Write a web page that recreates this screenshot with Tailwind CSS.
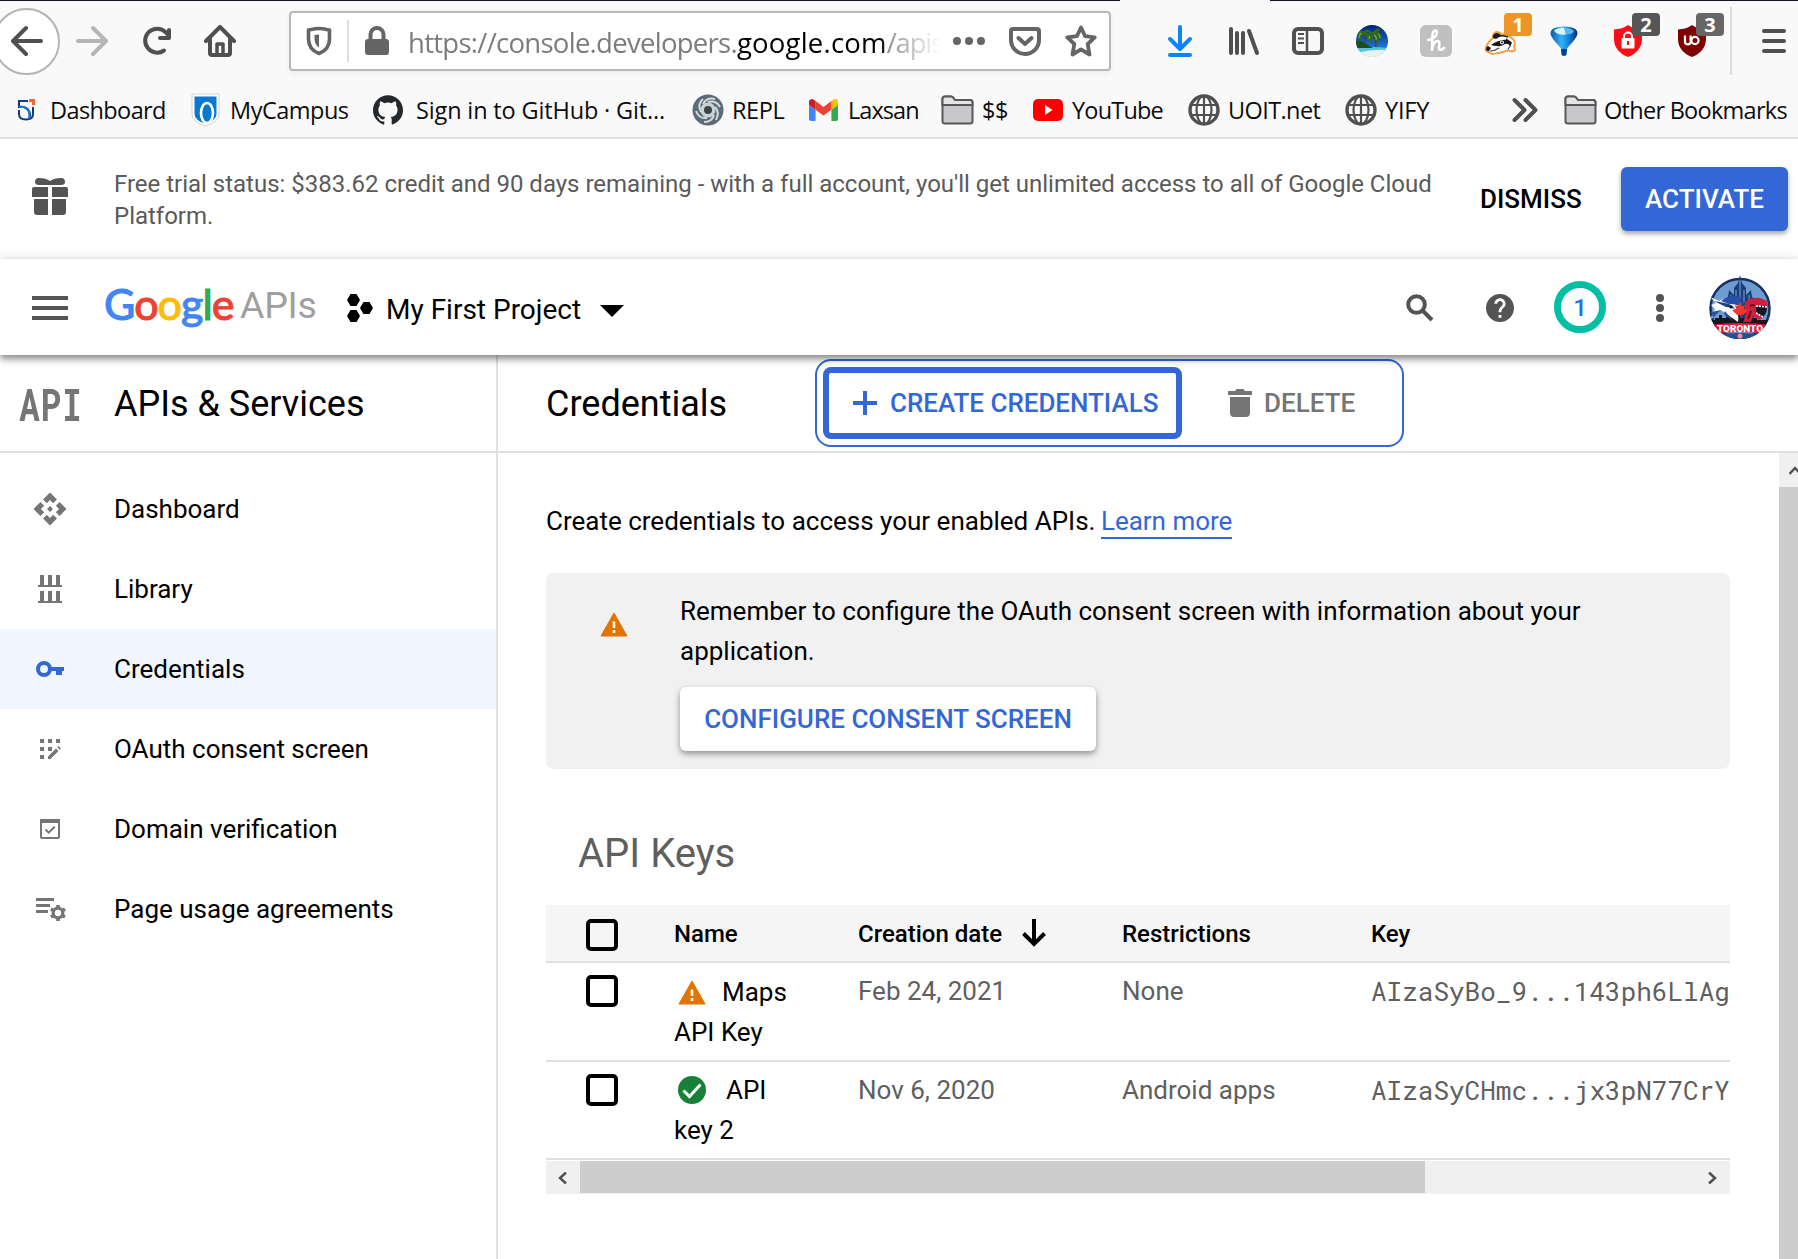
<!DOCTYPE html>
<html lang="en">
<head>
<meta charset="utf-8">
<title>Credentials</title>
<script src="https://cdn.jsdelivr.net/npm/@tailwindcss/browser@4"></script>
</head>
<body class="w-[1798px] h-[1259px] overflow-hidden bg-white text-black font-['Roboto',sans-serif] flex flex-col">

<!-- Browser chrome -->
<div class="h-[139px] shrink-0 bg-[#f9f9fa] border-b-2 border-[#e0e0e1] font-['Open_Sans','Noto_Sans',sans-serif] flex flex-col">
  <div class="h-px flex justify-between"><div class="w-[1120px] bg-[#15132b]"></div><div class="w-[528px] bg-[#15132b]"></div></div>
  <div class="h-20 flex items-center text-[#505052]">
    <div class="-ml-[7px] w-[67px] h-[67px] rounded-full bg-white border-2 border-[#b4b4b5] grid place-items-center">
      <svg width="32" height="32" viewBox="0 0 32 32" fill="none" stroke="currentColor" stroke-width="4" stroke-linecap="round" stroke-linejoin="round"><path d="M30 16H2M15 3 2 16l13 13"/></svg>
    </div>
    <svg class="ml-4" width="32" height="32" viewBox="0 0 32 32" fill="none" stroke="#b5b5b6" stroke-width="4" stroke-linecap="round" stroke-linejoin="round"><path d="M2 16h28M17 3l13 13-13 13"/></svg>
    <svg class="ml-[33px]" width="32" height="32" viewBox="0 0 32 32" fill="none" stroke="currentColor" stroke-width="4" stroke-linecap="round" stroke-linejoin="round"><path d="M23 25.500a12 12 0 1 1 1.500-18.500L28 11"/><path d="M28 5v8h-9" /></svg>
    <svg class="ml-[31px]" width="32" height="32" viewBox="0 0 32 32" fill="none" stroke="currentColor" stroke-width="4" stroke-linecap="round" stroke-linejoin="round"><path d="M2 16 16 2l14 14M6 14v14q0 2 2 2h16q2 0 2-2V14"/><path d="M13 29V19h6v10" stroke-width="3.500"/></svg>

    <!-- Address bar -->
    <div class="ml-[53px] w-[822px] h-[60px] rounded border-2 border-[#b9b9ba] bg-white shadow-[0_2px_6px_rgba(0,0,0,0.06)] flex items-center text-[#656566]">
      <svg class="ml-[15px]" width="26" height="30" viewBox="0 0 26 30" fill="none" stroke="currentColor" stroke-width="3.600"><path d="M13 2.500c4 0 7 .8 10.500 1.500v9c0 7-4 12-10.500 14.500C6.500 25 2.500 20 2.500 13V4C6 3.300 9 2.500 13 2.500z" stroke-linejoin="round"/><path d="M13 8.500v13c-3-2-4.500-5-4.500-8.500V9z" fill="currentColor" stroke="none"/></svg>
      <div class="ml-[15px] w-0.5 h-[42px] bg-[#dedede]"></div>
      <svg class="ml-[15px]" width="26" height="30" viewBox="0 0 26 30"><rect x="1" y="13" width="24" height="16" rx="3" fill="currentColor"/><path d="M6.500 15V8.500a6.500 6.500 0 0 1 13 0V15" fill="none" stroke="currentColor" stroke-width="4"/></svg>
      <div class="ml-[18px] w-[533px] pt-1 overflow-hidden whitespace-nowrap text-[27.500px] leading-10 text-[#7c7c7d] mask-r-from-[470px] mask-r-to-[533px]"><span class="tracking-[-0.720px]">https://console.developers.</span><span class="text-black tracking-[0.200px]">google.com</span><span class="tracking-[-1.200px]">/apis</span></div>
      <svg class="ml-3" width="32" height="30" viewBox="0 0 32 30" fill="currentColor"><circle cx="4" cy="15" r="4"/><circle cx="16" cy="15" r="4"/><circle cx="28" cy="15" r="4"/></svg>
      <svg class="ml-6" width="32" height="30" viewBox="0 0 32 30" fill="none" stroke="currentColor" stroke-width="4" stroke-linejoin="round" stroke-linecap="round"><path d="M4 3h24q2 0 2 2v9a14 14 0 0 1-28 0V5q0-2 2-2z"/><path d="m9.500 12 6.500 6 6.500-6"/></svg>
      <svg class="ml-6" width="32" height="32" viewBox="0 0 32 32" fill="none" stroke="currentColor" stroke-width="3.800" stroke-linejoin="round"><path d="m16 2.500 4.100 8.700 9.600 1.200-7 6.600 1.800 10.500L16 24.400l-8.500 5.100L9.300 19l-7-6.600 9.600-1.200z"/></svg>
    </div>

    <!-- Extension buttons -->
    <div class="ml-[37px] grid grid-cols-[repeat(9,64px)] place-items-center">
      <svg width="32" height="32" viewBox="0 0 32 32" fill="none" stroke="#0a84ff" stroke-width="4" stroke-linecap="round" stroke-linejoin="round"><path d="M16 2v22M6 14l10 10 10-10M6 30h20"/></svg>
      <svg width="32" height="32" viewBox="0 0 32 32" fill="none" stroke="currentColor" stroke-width="4" stroke-linecap="round"><path d="M3 4v24M9 8v20M15 8v20M21 6l8 22"/></svg>
      <svg width="32" height="32" viewBox="0 0 32 32" fill="none" stroke="currentColor" stroke-width="4"><rect x="2" y="4" width="28" height="24" rx="4"/><path d="M15 4v24" stroke-width="2.500"/><path d="M6 9h6M6 13.500h6M6 18h6" stroke-width="2.200"/></svg>
      <svg width="32" height="32" viewBox="0 0 32 32"><defs><clipPath id="isle"><circle cx="16" cy="16" r="16"/></clipPath><linearGradient id="sky" x1="0" y1="0" x2="0" y2="1"><stop offset="0" stop-color="#06217d"/><stop offset=".65" stop-color="#1a6fd0"/><stop offset="1" stop-color="#4ec3e8"/></linearGradient></defs><g clip-path="url(#isle)"><path fill="url(#sky)" d="M0 0h32v32H0z"/><path d="M0 26q14-4 32-1v8H0z" fill="#e9f2f2"/><path d="M0 23q12-2 32 0v2q-16-1-32 3z" fill="#54c4dc"/><path d="M0 16q5-1 9 2t8 5H0z" fill="#1f4d17"/><path d="M9 17q1-6-1-9M20 22q0-7-2-13" stroke="#54431d" stroke-width="1.500" fill="none"/><g stroke="#2e6b1a" stroke-width="2.400" fill="none" stroke-linecap="round"><path d="M8 8Q4 5 1 10M8 8q-4 1-4 6M8 8q4 0 4 6M8 8q3-4 6-1M18 9q-4-3-6 2M18 9q-4 2-3 8M18 9q4 1 4 8M18 9q5-3 7 3M18 9q2-5 5-4"/></g><path d="M5 8q-2 2-2 5M18 10q3 2 2 5M14 11q-1 1-1 3M22 9q2 1 2 4" stroke="#7fae35" stroke-width="1.200" fill="none"/></g></svg>
      <div class="w-8 h-8 rounded-md bg-[#c0c0c0] grid place-items-center"><svg width="22" height="26" viewBox="0 0 22 26" fill="none" stroke="#fff" stroke-width="2.600" stroke-linecap="round" stroke-linejoin="round"><path d="M3 12C7 12 12 8 12 4.500 12 1.500 8 2 7.500 7L7 22c1-6 3-9 5.500-9s2 4 1.500 6.500 2 3.500 5 .5"/></svg></div>
      <div class="relative w-8 h-8">
        <svg width="32" height="32" viewBox="0 0 32 32"><path d="M1.500 24Q3 18 9 13q-1-4 3-6 4 0 5 2 7 0 12 5 3 4 1 7l1 4q-3 3-7 0-5 3-10 3-7 2-9-1-3 0-3.500-3z" fill="#fff" stroke="#f29a3c" stroke-width="1.800"/><path d="M9 13q-1-3 3-5 4 0 5 3l-5 3z" fill="#181818"/><path d="M2 24q0-2 2-3l3 2-2 3q-3 0-3-2z" fill="#181818"/><path d="M7 20q5-4 12-5 6-1 9 3l-2 3q-2-3-5-2-5 3-8 2-3 0-6-1z" fill="#181818"/><path d="M14 11q6-1 10 1M22 14l5 4" stroke="#181818" stroke-width="1.500" fill="none"/><circle cx="18" cy="17.500" r="2" fill="#fff"/><circle cx="18" cy="17.500" r="1" fill="#181818"/><path d="M6 26q5 0 9-3M24 24l3-4" stroke="#444" stroke-width="1.200" fill="none"/></svg>
        <div class="absolute left-5 -top-3 w-7 h-[23px] rounded-sm bg-[#ee9527] text-white font-bold text-[20px] leading-6 text-center">1</div>
      </div>
      <svg width="32" height="32" viewBox="0 0 32 32"><defs><linearGradient id="bal"><stop offset="0" stop-color="#0a56a8"/><stop offset=".4" stop-color="#32b4f5"/><stop offset=".7" stop-color="#0f7bd6"/><stop offset="1" stop-color="#042f6b"/></linearGradient></defs><path d="M2.500 8Q3 1.500 16 1.500T29.500 8q0 3-4.500 8.500-4 4.500-6 7l-.5 6.500q-2.500 2-5 0L13 23.500q-2-2.500-6-7Q2.500 11 2.500 8z" fill="url(#bal)"/><path d="M6 6q3-3.500 10-3.500l2 7q-8 1-12-3.500z" fill="#d8f3fd"/><path d="M16 2.500q8 .5 10 4-2 3-8 3z" fill="#5bb7ee"/><path d="M13 24h6l-.8 6q-2.200 1.500-4.400 0z" fill="#093f7c"/></svg>
      <div class="relative w-8 h-8">
        <svg width="32" height="32" viewBox="0 0 32 32"><path d="M16 0q5 4 14 4.500V14c0 9-6 15-14 18C8 29 2 23 2 14V4.500Q11 4 16 0z" fill="#fb0f17"/><rect x="9.500" y="13" width="13" height="10.500" rx="1" fill="#fff"/><path d="M12 14v-2.500a4 4 0 0 1 8 0V14" fill="none" stroke="#fff" stroke-width="2"/><path d="M16 16v4" stroke="#fb0f17" stroke-width="2"/></svg>
        <div class="absolute left-5 -top-3 w-7 h-[23px] rounded-sm bg-[#565656] text-white font-bold text-[20px] leading-6 text-center">2</div>
      </div>
      <div class="relative w-8 h-8">
        <svg width="32" height="32" viewBox="0 0 32 32"><path d="M16 0q5 4 14 4.500V14c0 9-6 15-14 18C8 29 2 23 2 14V4.500Q11 4 16 0z" fill="#800000"/><path d="M9 10.500v5.500a2.800 2.800 0 0 0 5.600 1" fill="none" stroke="#fff" stroke-width="2.200"/><path d="M14.600 10.500v6" stroke="#fff" stroke-width="2.200"/><circle cx="19" cy="15.500" r="3.600" fill="none" stroke="#fff" stroke-width="2.200"/></svg>
        <div class="absolute left-5 -top-3 w-7 h-[23px] rounded-sm bg-[#666] text-white font-bold text-[20px] leading-6 text-center">3</div>
      </div>
    </div>
    <div class="ml-[6px] w-0.5 h-[68px] bg-[#dcdcdd]"></div>
    <svg class="ml-[30px]" width="24" height="24" viewBox="0 0 24 24" stroke="currentColor" stroke-width="4" stroke-linecap="round"><path d="M2 2h20M2 12h20M2 22h20"/></svg>
  </div>

  <!-- Bookmarks toolbar -->
  <div class="h-14 pt-px flex items-center whitespace-nowrap text-[23.500px] leading-8 text-[#0c0c0d]">
    <div class="pl-[17px] w-[188px] flex items-center gap-[15px]">
      <svg width="18" height="22" viewBox="0 0 18 22" fill="none" stroke="#123a7a" stroke-width="2"><path d="M11 2H2v6q7-1 10 4 2 4 0 8"/><path d="M2 11v4q0 5.500 7 5.500t7-5.500V8"/><path d="M2 8q7-1 10 5 1 4 0 7" stroke="#1c75d8"/><path d="M12 1.500h4.500V6" stroke="#f2663b" stroke-width="3"/></svg>
      <span class="tracking-[-0.600px] pt-px">Dashboard</span></div>
    <div class="w-[183px] flex items-center gap-2.5 pl-[3px]">
      <svg width="29" height="34" viewBox="0 0 29 34"><path d="M1 1h27v20q0 8-13.500 12Q1 29 1 21z" fill="#fff" stroke="#d3d3d3"/><path d="M3.500 3.500h22V21q0 6-11 10-11-4-11-10z" fill="#0a78cf"/><ellipse cx="16" cy="20" rx="6" ry="10" fill="none" stroke="#fff" stroke-width="2.600"/></svg>
      <span class="tracking-[-0.500px] pt-px">MyCampus</span></div>
    <div class="w-[319px] flex items-center gap-[13px] pl-0.5">
      <svg width="30" height="30" viewBox="0 0 24 24" fill="#24292e"><path d="M12 .297c-6.630 0-12 5.373-12 12 0 5.303 3.438 9.800 8.205 11.385.6.113.82-.258.82-.577 0-.285-.01-1.040-.015-2.040-3.338.724-4.042-1.610-4.042-1.610C4.422 18.070 3.633 17.700 3.633 17.700c-1.087-.744.084-.729.084-.729 1.205.084 1.838 1.236 1.838 1.236 1.070 1.835 2.809 1.305 3.495.998.108-.776.417-1.305.76-1.605-2.665-.3-5.466-1.332-5.466-5.930 0-1.310.465-2.380 1.235-3.220-.135-.303-.54-1.523.105-3.176 0 0 1.005-.322 3.300 1.230.96-.267 1.980-.399 3-.405 1.020.006 2.040.138 3 .405 2.280-1.552 3.285-1.230 3.285-1.230.645 1.653.24 2.873.12 3.176.765.840 1.230 1.910 1.230 3.220 0 4.610-2.805 5.625-5.475 5.920.42.360.81 1.096.81 2.220 0 1.606-.015 2.896-.015 3.286 0 .315.21.690.825.570C20.565 22.092 24 17.592 24 12.297c0-6.627-5.373-12-12-12"/></svg>
      <span class="tracking-[-0.150px] pt-px">Sign in to GitHub · Git...</span></div>
    <div class="w-[117px] flex items-center gap-2 pl-0.5">
      <svg width="32" height="32" viewBox="0 0 32 32" fill="none"><circle cx="16" cy="16" r="15.500" fill="#5d6b76"/><g stroke="#d3dbe0" stroke-width="2"><path d="M16 8Q24 6 28 13M23 13q5 5 1 13M22 21q-2 7-10 7M15 24Q7 25 4 17M9 18Q5 10 11 5M11 10q4-7 12-5"/></g><circle cx="16" cy="16" r="7.500" fill="#c9d2d7"/><circle cx="16" cy="16" r="4" fill="#3e4346"/></svg>
      <span class="tracking-[-0.400px] pt-px">REPL</span></div>
    <div class="w-[134px] flex items-center gap-2.5 pl-0.5">
      <svg width="29" height="22" viewBox="52 42 88 66"><path fill="#4285f4" d="M58 108h14V74L52 59v43c0 3.320 2.690 6 6 6"/><path fill="#34a853" d="M120 108h14c3.320 0 6-2.690 6-6V59l-20 15"/><path fill="#fbbc04" d="M120 48v26l20-15v-8c0-7.420-8.470-11.650-14.400-7.200"/><path fill="#ea4335" d="M72 74V48l24 18 24-18v26L96 92"/><path fill="#c5221f" d="M52 51v8l20 15V48l-5.600-4.200c-5.940-4.450-14.400-.22-14.400 7.200"/></svg>
      <span class="tracking-[-0.950px] pt-px">Laxsan</span></div>
    <div class="w-[90px] flex items-center gap-2">
      <svg width="33" height="30" viewBox="0 0 33 30" stroke="#58585a" stroke-width="2"><path d="M1.500 26V4q0-2.500 2.500-2.500h6q1.500 0 2 1L14 5h15q2.500 0 2.500 2.500V26q0 2.500-2.500 2.500H4q-2.500 0-2.500-2.500z" fill="#c8c8ca"/><path d="M1.500 10V4q0-2.500 2.500-2.500h6q1.500 0 2 1L14 5h15q2.500 0 2.500 2.500V10z" fill="#e4e4e5"/></svg>
      <span class="tracking-[-0.500px] pt-px">$$</span></div>
    <div class="w-[155px] flex items-center gap-2.5 pl-0.5">
      <svg width="30" height="22" viewBox="0 0 30 22"><rect width="30" height="22" rx="5" fill="#f00"/><path d="m12 6 7.500 5-7.500 5z" fill="#fff"/></svg>
      <span class="tracking-[-0.800px] pt-px -ml-px">YouTube</span></div>
    <div class="w-[157px] flex items-center gap-2 pl-0.5">
      <svg width="32" height="32" viewBox="0 0 32 32" fill="none" stroke="#505052" stroke-width="2.200"><circle cx="16" cy="16" r="14" stroke-width="3.400"/><ellipse cx="16" cy="16" rx="7.500" ry="14"/><path d="M16 2v28M3.500 11h25M3.500 21h25"/></svg>
      <span class="tracking-[-0.600px] pt-px">UOIT.net</span></div>
    <div class="w-[169px] flex items-center gap-2 pl-0.5">
      <svg width="32" height="32" viewBox="0 0 32 32" fill="none" stroke="#505052" stroke-width="2.200"><circle cx="16" cy="16" r="14" stroke-width="3.400"/><ellipse cx="16" cy="16" rx="7.500" ry="14"/><path d="M16 2v28M3.500 11h25M3.500 21h25"/></svg>
      <span class="tracking-[-0.200px] pt-px">YIFY</span></div>
    <svg width="26" height="26" viewBox="0 0 26 26" fill="none" stroke="#505052" stroke-width="4" stroke-linecap="round" stroke-linejoin="round"><path d="m2.500 3 10 10-10 10M13.500 3l10 10-10 10"/></svg>
    <div class="ml-[26px] flex items-center gap-[7px]">
      <svg width="33" height="30" viewBox="0 0 33 30" stroke="#58585a" stroke-width="2"><path d="M1.500 26V4q0-2.500 2.500-2.500h6q1.500 0 2 1L14 5h15q2.500 0 2.500 2.500V26q0 2.500-2.500 2.500H4q-2.500 0-2.500-2.500z" fill="#c8c8ca"/><path d="M1.500 10V4q0-2.500 2.500-2.500h6q1.500 0 2 1L14 5h15q2.500 0 2.500 2.500V10z" fill="#e4e4e5"/></svg>
      <span class="tracking-[-0.720px] pt-px">Other Bookmarks</span></div>
  </div>
</div>

<!-- Free trial banner -->
<div class="h-[120px] shrink-0 flex items-center">
  <svg class="ml-8 mb-1.5" width="36" height="38" viewBox="0 0 36 38" fill="#545454"><path d="M2 10h14v10H0v-8q0-2 2-2zM20 10h14q2 0 2 2v8H20zM2 22h14v16H5q-3 0-3-3zM20 22h14v13q0 3-3 3H20z"/><path d="M3 5q0-4 4-4 7 0 11 3 4-3 11-3 4 0 4 4 0 3-4 3H7q-4 0-4-3z"/></svg>
  <div class="ml-[46px] w-[1366px] pt-0.5 text-2xl leading-8 tracking-[-0.010px] text-[#5a5a5a]">Free trial status: $383.62 credit and 90 days remaining - with a full account, you'll get unlimited access to all of Google Cloud<br>Platform.</div>
  <div class="text-[26px] font-medium w-[141px]">DISMISS</div>
  <div class="w-[167px] h-16 rounded-md bg-[#3367d6] text-white text-[26px] font-medium grid place-items-center shadow-[0_3px_5px_rgba(0,0,0,0.35)]">ACTIVATE</div>
</div>

<!-- Console header -->
<header class="relative z-10 h-24 shrink-0 bg-white flex items-center shadow-[0_4px_6px_rgba(0,0,0,0.35),0_2px_12px_rgba(0,0,0,0.2)]">
  <svg class="ml-8 mt-0.5" width="36" height="24" viewBox="0 0 36 24" fill="#545454"><path d="M0 0h36v4H0zM0 10h36v4H0zM0 20h36v4H0z"/></svg>
  <div class="ml-9 mb-1.5 w-[243px] flex items-start whitespace-nowrap">
    <div class="w-[136px] font-['Lato',sans-serif] text-[43px] leading-[56px] tracking-[-1px] font-medium [-webkit-text-stroke:0.900px]"><span class="text-[#4285f4]">G</span><span class="text-[#ea4335]">o</span><span class="text-[#fbbc05]">o</span><span class="text-[#4285f4]">g</span><span class="text-[#34a853]">l</span><span class="text-[#ea4335]">e</span></div>
    <span class="pt-px text-[37.500px] leading-[56px] tracking-[-0.300px] text-[#9f9f9f]">APIs</span>
  </div>
  <svg class="mt-0.5" width="26" height="28" viewBox="0 0 26 28"><path d="M3.500 0h6L13 6l-3.500 6h-6L0 6zM3.500 16h6l3.500 6-3.500 6h-6L0 22zM16.500 8h6l3.500 6-3.500 6h-6L13 14z"/></svg>
  <div class="ml-[13px] w-[214px] pt-1.5 text-[28px] leading-9">My First Project</div>
  <svg class="mt-[7px]" width="24" height="12" viewBox="0 0 24 12"><path d="M0 0h24L12 12z"/></svg>
  <svg class="ml-auto mt-0.5" width="28" height="28" viewBox="0 0 28 28" fill="none" stroke="#545454" stroke-width="4"><circle cx="10.500" cy="10.500" r="8.300"/><path d="m16.500 16.500 9.500 9.500"/></svg>
  <svg class="ml-[52px] mt-0.5" width="28" height="28" viewBox="2 2 20 20" fill="#545454"><path d="M12 2C6.480 2 2 6.480 2 12s4.480 10 10 10 10-4.480 10-10S17.520 2 12 2zm1 17h-2v-2h2v2zm2.070-7.750-.9.920C13.450 12.900 13 13.500 13 15h-2v-.5c0-1.100.45-2.100 1.170-2.830l1.240-1.260c.37-.36.59-.86.59-1.410 0-1.100-.9-2-2-2s-2 .9-2 2H8c0-2.210 1.790-4 4-4s4 1.790 4 4c0 .88-.36 1.680-.93 2.250z"/></svg>
  <div class="ml-10 w-[52px] h-[52px] rounded-full border-[7px] border-[#00bfa5] grid place-items-center text-[#1a73e8] text-2xl font-medium"><span class="pt-0.5">1</span></div>
  <svg class="ml-[50px] mt-0.5" width="8" height="28" viewBox="0 0 8 28" fill="#545454"><circle cx="4" cy="4" r="4"/><circle cx="4" cy="14" r="4"/><circle cx="4" cy="24" r="4"/></svg>
  <svg class="ml-[45px] mr-[27px]" width="62" height="64" viewBox="0 0 62 64"><defs><clipPath id="av"><circle cx="31" cy="33.500" r="30.500"/></clipPath></defs>
    <circle cx="31" cy="33.500" r="29.500" fill="#6f9bd3" stroke="#16305f" stroke-width="2.500"/>
    <path d="M31 0l2 8 4 5v7l5-5 1 7 6 4-5 20H18l-5-20 6-4 1-7 5 5v-7l4-5z" fill="#1b3d78"/>
    <path d="M31 5v20M27 15v12M35 15v12M22 20v6M40 20v6" stroke="#7fa8dc"/>
    <g clip-path="url(#av)">
      <path d="M0 45h62v9H0z" fill="#15171d"/><path d="M6 48v-5h4v-3h3v3h5v-6h3v6h6v-5h4v5h6v-7h3v7h8v5z" fill="#15171d"/>
      <path d="M1 22l9 4q4-3 8-2 11 2 16 14l-6-1q2 4 1 10L12 35 2 44q1-6 4-10l-4-4 5-2z" fill="#fff"/>
      <path d="M12 26q10-8 22-3l-3 3 5 2-4 2 3 5q-6-7-15-6z" fill="#2850a8"/>
      <path d="M5 26l11 2q7 1 10 6-5-2-9-2z" fill="#20407f"/>
      <path d="M2 37l10-2-8 8zM16 36l8 10-9-7z" fill="#29549f"/><circle cx="22" cy="32" r="1.500" fill="#111"/>
      <path d="M36 27q7-5 15-4l7 3 1 6-9-2-3 5 8 7-5 3-6-4-2 6h-8q4-8 2-14z" fill="#cf1f3c"/>
      <path d="M47 32q6-3 11 0 0 8-5 10l-6-5z" fill="#15171d"/><path d="M47 31l11 1M47 38l7 4" stroke="#fff" stroke-width="1.600" stroke-dasharray="2 1"/><path d="M41 31q3-2 5 0M42 36l-3 8" stroke="#4c0c18" stroke-width="1.500" fill="none"/>
      <path d="M31 27l2 4 3-1-1 4 4 1-5 5h-2l1 5-2-5h-3l-5-5 4-1-1-4 3 1z" fill="#ee3a2c"/>
      <path d="M0 50q31-4 62 0l-4 9q-27-4-54 0z" fill="#e01f3e"/><path d="M4 60q27-4 54 0v5H4z" fill="#254f92"/><circle cx="31" cy="61" r="2.500" fill="#ef8a96"/>
      <text x="31" y="56.500" text-anchor="middle" font-family="Roboto,sans-serif" font-weight="900" font-size="8.500" textLength="46" lengthAdjust="spacingAndGlyphs" fill="#fff">TORONTO</text>
    </g></svg>
</header>

<div class="grow min-h-0 flex">
  <!-- Sidebar -->
  <aside class="w-[498px] shrink-0 border-r-2 border-[#e0e0e0] text-[26px]">
    <div class="h-[98px] border-b-2 border-[#e0e0e0] flex items-center">
      <div class="ml-[19px] w-[95px] pt-px font-['Roboto_Mono','DejaVu_Sans_Mono',monospace] font-bold text-[44px] leading-none tracking-[1px] scale-x-[0.780] origin-left text-[#757575]">API</div>
      <span class="text-4xl pt-0.5">APIs &amp; Services</span>
    </div>
    <nav class="pt-4 text-[#757575]">
      <div class="h-20 pl-8 flex items-center gap-[46px]">
        <svg width="36" height="36" viewBox="0 0 24 24" fill="currentColor"><path d="M14 12l-2 2-2-2 2-2 2 2zM12 6l2.120 2.120 2.500-2.500L12 1 7.380 5.620l2.500 2.500L12 6zm-6 6l2.120-2.120-2.500-2.500L1 12l4.620 4.620 2.500-2.500L6 12zm12 0l-2.120 2.120 2.500 2.500L23 12l-4.620-4.620-2.500 2.500L18 12zm-6 6l-2.120-2.120-2.500 2.500L12 23l4.620-4.620-2.500-2.500L12 18z"/></svg>
        <span class="text-black">Dashboard</span></div>
      <div class="h-20 pl-8 flex items-center gap-[46px]">
        <svg width="36" height="36" viewBox="0 0 36 36" fill="currentColor"><path d="M8 4h4v10h4V4h4v10h4V4h4v10h2v2H6v-2h2zM8 20h4v10h4V20h4v10h4V20h4v10h2v2H6v-2h2z"/></svg>
        <span class="text-black">Library</span></div>
      <div class="h-20 pl-8 flex items-center gap-[46px] bg-[#f0f5fe]">
        <svg width="36" height="36" viewBox="0 0 36 36" fill="#3367d6"><circle cx="12" cy="18" r="6" fill="none" stroke="#3367d6" stroke-width="4"/><path d="M18 16h14v4h-2v4h-6v-4h-6z"/></svg>
        <span class="text-black">Credentials</span></div>
      <div class="h-20 pl-8 flex items-center gap-[46px]">
        <svg width="36" height="36" viewBox="0 0 36 36" fill="currentColor"><path d="M8 8h4v4H8zM16 8h4v4h-4zM24 8h4v4h-4zM8 16h4v4H8zM16 16h4v4h-4zM8 24h4v4H8zM16 28v-2.500l8-8 2.500 2.500-8 8zM25.300 16.200l1.200-1.200 2.500 2.500-1.200 1.200z"/></svg>
        <span class="text-black">OAuth consent screen</span></div>
      <div class="h-20 pl-8 flex items-center gap-[46px]">
        <svg width="36" height="36" viewBox="0 0 36 36" fill="none" stroke="currentColor" stroke-width="2"><rect x="9" y="9" width="18" height="18" rx="1"/><path d="M8 10h20" stroke-width="4"/><path d="m13.500 18.500 3.200 3.200 6-6"/></svg>
        <span class="text-black">Domain verification</span></div>
      <div class="h-20 pl-8 flex items-center gap-[46px]">
        <svg width="36" height="36" viewBox="0 0 36 36" fill="currentColor"><path d="M4 7h18v3H4zM4 13h14v3H4zM4 19h12v3H4z"/><circle cx="26" cy="22" r="4.800" fill="none" stroke="currentColor" stroke-width="3.200"/><path d="M26 14v3M26 27v3M19 18l2.800 1.600M30.200 24.400 33 26M19 26l2.800-1.600M30.200 19.600 33 18" stroke="currentColor" stroke-width="3.600"/></svg>
        <span class="text-black">Page usage agreements</span></div>
    </nav>
  </aside>

  <!-- Main panel -->
  <main class="grow min-w-0 flex flex-col">
    <div class="h-[98px] shrink-0 border-b-2 border-[#e0e0e0] flex items-center">
      <div class="ml-12 w-[269px] pt-0.5 text-4xl">Credentials</div>
      <div class="w-[589px] h-[88px] rounded-2xl border-2 border-[#3367d6] pl-1.5 flex items-center text-[26px] font-medium text-[#757575]">
        <div class="w-[359px] h-[72px] rounded-lg border-[6px] border-[#3367d6] pl-6 flex items-center text-[#3367d6]">
          <svg width="24" height="24" viewBox="0 0 24 24" fill="currentColor"><path d="M10 0h4v10h10v4H14v10h-4V14H0v-4h10z"/></svg>
          <span class="ml-[13px] tracking-[-0.030px]">CREATE CREDENTIALS</span>
        </div>
        <svg class="ml-[46px]" width="24" height="28" viewBox="0 0 24 28" fill="currentColor"><path d="M0 2h7l1.500-2h7L17 2h7v4H0zM2 8h20v16q0 4-4 4H6q-4 0-4-4z"/></svg>
        <span class="ml-3">DELETE</span>
      </div>
    </div>
    <div class="grow min-h-0 flex">
      <div class="pl-12 w-[1232px] text-[26px] leading-10">
        <p class="mt-12 h-10">Create credentials to access your enabled APIs. <a class="inline-block leading-8 -ml-px border-b-2 border-[#3367d6] text-[#3367d6]">Learn more</a></p>

        <div class="mt-8 h-[196px] rounded-lg bg-[#f1f1f1] flex">
          <svg class="ml-[54px] mt-[39px]" width="28" height="25" viewBox="0 0 28 25"><path d="M14 1l13 23H1z" fill="#e37400" stroke="#e37400" stroke-linejoin="round"/><path d="M12.700 9.500h2.600v6.500h-2.600zM12.700 18h2.600v3h-2.600z" fill="#fff"/></svg>
          <div class="ml-[52px] pt-[18px]">
            <div>Remember to configure the OAuth consent screen with information about your<br>application.</div>
            <div class="mt-4 w-[416px] h-16 rounded-md bg-white shadow-[0_3px_6px_rgba(0,0,0,0.4)] grid place-items-center text-[#3367d6] font-medium">CONFIGURE CONSENT SCREEN</div>
          </div>
        </div>

        <h2 class="mt-[61px] ml-8 text-[40px] leading-[48px] text-[#5f5f5f]">API Keys</h2>

        <div class="mt-[27px] whitespace-nowrap text-[#5f5f5f]">
          <div class="h-[58px] bg-[#f5f5f5] border-b-2 border-[#e0e0e0] grid grid-cols-[128px_184px_264px_249px_1fr] items-center text-2xl font-medium text-black">
            <div class="ml-10 mt-1 w-8 h-8 rounded-[5px] border-4 border-black"></div>
            <span class="pt-0.5">Name</span>
            <span class="flex items-center gap-5"><span class="pt-0.5">Creation date</span><svg width="24" height="28" viewBox="0 0 24 28" fill="none" stroke="#000" stroke-width="4"><path d="M12 0v25M1.500 14.500 12 25l10.500-10.500"/></svg></span>
            <span class="pt-0.5">Restrictions</span>
            <span class="pt-0.5">Key</span>
          </div>
          <div class="h-[99px] pt-2 border-b-2 border-[#e0e0e0] grid grid-cols-[128px_184px_264px_249px_1fr] items-start">
            <div class="ml-10 mt-1 w-8 h-8 rounded-[5px] border-4 border-black"></div>
            <div class="text-black pt-px"><div class="flex items-center"><svg class="ml-1" width="28" height="25" viewBox="0 0 28 25"><path d="M14 1l13 23H1z" fill="#e37400" stroke="#e37400" stroke-linejoin="round"/><path d="M12.700 9.500h2.600v6.500h-2.600zM12.700 18h2.600v3h-2.600z" fill="#fff"/></svg><span class="ml-4">Maps</span></div>API Key</div>
            <span>Feb 24, 2021</span>
            <span>None</span>
            <span class="font-['Roboto_Mono','DejaVu_Sans_Mono',monospace]">AIzaSyBo_9...143ph6LlAg</span>
          </div>
          <div class="h-[98px] pt-2 border-b-2 border-[#e0e0e0] grid grid-cols-[128px_184px_264px_249px_1fr] items-start">
            <div class="ml-10 mt-1 w-8 h-8 rounded-[5px] border-4 border-black"></div>
            <div class="text-black"><div class="flex items-center"><svg class="ml-1" width="28" height="28" viewBox="0 0 28 28"><circle cx="14" cy="14" r="14" fill="#188038"/><path d="m5.500 14.500 6 6L22.500 8.500" fill="none" stroke="#fff" stroke-width="3"/></svg><span class="ml-5">API</span></div>key 2</div>
            <span>Nov 6, 2020</span>
            <span>Android apps</span>
            <span class="font-['Roboto_Mono','DejaVu_Sans_Mono',monospace]">AIzaSyCHmc...jx3pN77CrY</span>
          </div>
          <div class="mt-px h-[33px] bg-[#f0f0f0] flex items-center">
            <svg class="ml-3" width="9" height="12" viewBox="0 0 9 12" fill="none" stroke="#505050" stroke-width="2.500"><path d="M8 .5 2 6l6 5.500"/></svg>
            <div class="ml-[13px] mb-px w-[845px] h-8 bg-[#cdcdcd]"></div>
            <svg class="ml-auto mr-[13px]" width="9" height="12" viewBox="0 0 9 12" fill="none" stroke="#505050" stroke-width="2.500"><path d="m1 .5 6 5.500-6 5.500"/></svg>
          </div>
        </div>
      </div>
      <div class="ml-auto w-[19px] bg-[#cdcdcd] overflow-hidden">
        <div class="h-[34px] bg-[#f0f0f0] flex items-center"><svg class="ml-2.5 shrink-0" width="12" height="9" viewBox="0 0 12 9" fill="none" stroke="#505050" stroke-width="2.500"><path d="M.5 8 6 2l5.500 6"/></svg></div>
      </div>
    </div>
  </main>
</div>
</body>
</html>
